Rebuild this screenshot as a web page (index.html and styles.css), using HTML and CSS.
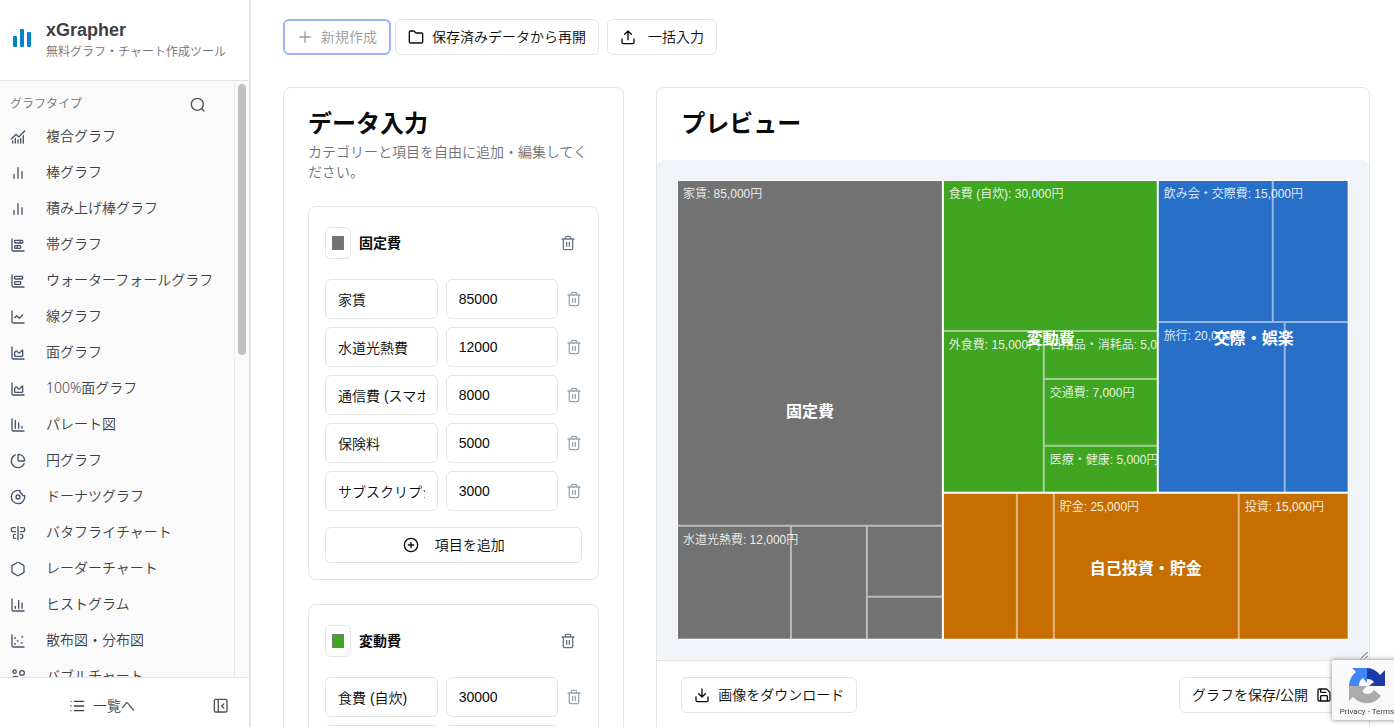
FILE: index.html
```html
<!DOCTYPE html>
<html lang="ja">
<head>
  <meta charset="UTF-8" />
  <meta name="viewport" content="width=device-width, initial-scale=1" />
  <title>xGrapher</title>
  <link rel="stylesheet" href="styles.css">
</head>
<body>
  <!-- Icon set -->
  <svg class="sprite" aria-hidden="true">
    <symbol id="i-combined" viewBox="0 0 24 24"><path d="M12 16v5M16 14v7M20 10v11M22 3l-8.646 8.646a.5.5 0 0 1-.708 0L9.354 8.354a.5.5 0 0 0-.707 0L2 15M4 18v3M8 14v7"/></symbol>
    <symbol id="i-bars" viewBox="0 0 24 24"><path d="M18 20V10M12 20V4M6 20v-6"/></symbol>
    <symbol id="i-stacked" viewBox="0 0 24 24"><path d="M11 13v4M15 5v4M3 3v16a2 2 0 0 0 2 2h16"/><rect x="7" y="13" width="9" height="4" rx="1"/><rect x="7" y="5" width="12" height="4" rx="1"/></symbol>
    <symbol id="i-waterfall" viewBox="0 0 24 24"><path d="M3 3v16a2 2 0 0 0 2 2h16"/><rect x="7" y="13" width="9" height="4" rx="1"/><rect x="7" y="5" width="12" height="4" rx="1"/></symbol>
    <symbol id="i-line" viewBox="0 0 24 24"><path d="M3 3v16a2 2 0 0 0 2 2h16M19 9l-5 5-4-4-3 3"/></symbol>
    <symbol id="i-area" viewBox="0 0 24 24"><path d="M3 3v16a2 2 0 0 0 2 2h16M7 11.207a.5.5 0 0 1 .146-.353l2-2a.5.5 0 0 1 .708 0l3.292 3.292a.5.5 0 0 0 .708 0l4.292-4.292a.5.5 0 0 1 .854.353V16a1 1 0 0 1-1 1H8a1 1 0 0 1-1-1z"/></symbol>
    <symbol id="i-pareto" viewBox="0 0 24 24"><path d="M13 17V9M18 17v-3M3 3v16a2 2 0 0 0 2 2h16M8 17V5"/></symbol>
    <symbol id="i-pie" viewBox="0 0 24 24"><path d="M21 12c.552 0 1.005-.449.95-.998a10 10 0 0 0-8.953-8.951c-.55-.055-.998.398-.998.95v8a1 1 0 0 0 1 1zM21.21 15.89A10 10 0 1 1 8 2.83"/></symbol>
    <symbol id="i-donut" viewBox="0 0 24 24"><path d="M20.5 10a2.5 2.5 0 0 1-2.4-3H18a2.95 2.95 0 0 1-2.6-4.4 10 10 0 1 0 6.3 7.1c-.3.2-.8.3-1.2.3"/><circle cx="12" cy="12" r="3"/></symbol>
    <symbol id="i-butterfly" viewBox="0 0 24 24"><path d="M12 2v20M8 10H4a2 2 0 0 1-2-2V6a2 2 0 0 1 2-2h4M16 10h4a2 2 0 0 0 2-2V6a2 2 0 0 0-2-2h-4M8 20H7a2 2 0 0 1-2-2v-2a2 2 0 0 1 2-2h1M16 14h1a2 2 0 0 1 2 2v2a2 2 0 0 1-2 2h-1"/></symbol>
    <symbol id="i-hexagon" viewBox="0 0 24 24"><path d="M21 16V8a2 2 0 0 0-1-1.73l-7-4a2 2 0 0 0-2 0l-7 4A2 2 0 0 0 3 8v8a2 2 0 0 0 1 1.73l7 4a2 2 0 0 0 2 0l7-4A2 2 0 0 0 21 16z"/></symbol>
    <symbol id="i-histogram" viewBox="0 0 24 24"><path d="M3 3v16a2 2 0 0 0 2 2h16M18 17V9M13 17V5M8 17v-3"/></symbol>
    <symbol id="i-scatter" viewBox="0 0 24 24"><circle cx="7.5" cy="7.5" r=".5"/><circle cx="18.5" cy="5.5" r=".5"/><circle cx="11.5" cy="11.5" r=".5"/><circle cx="7.5" cy="16.5" r=".5"/><circle cx="17.5" cy="14.5" r=".5"/><path d="M3 3v16a2 2 0 0 0 2 2h16"/></symbol>
    <symbol id="i-bubble" viewBox="0 0 24 24"><circle cx="7" cy="4" r="2.500"/><circle cx="18" cy="6" r="3.500"/><circle cx="8" cy="16" r="5"/></symbol>
    <symbol id="i-search" viewBox="0 0 24 24"><circle cx="11" cy="11" r="9"/><path d="M21 21l-3.500-3.500"/></symbol>
    <symbol id="i-list" viewBox="0 0 24 24"><path d="M8 5h14M8 12h14M8 19h14M3 5h.01M3 12h.01M3 19h.01"/></symbol>
    <symbol id="i-panel" viewBox="0 0 24 24"><rect x="2" y="2" width="19" height="19" rx="2"/><path d="M8 2v19M16 15l-3-3 3-3"/></symbol>
    <symbol id="i-plus" viewBox="0 0 24 24"><path d="M4 12h16M12 4v16"/></symbol>
    <symbol id="i-folder" viewBox="0 0 24 24"><path d="M20 21a2 2 0 0 0 2-2V8a2 2 0 0 0-2-2h-8L9 3H4a2 2 0 0 0-2 2v14a2 2 0 0 0 2 2z"/></symbol>
    <symbol id="i-upload" viewBox="0 0 24 24"><path d="M21 15v5a2 2 0 0 1-2 2H5a2 2 0 0 1-2-2v-5M17 8l-5-5-5 5M12 3v13"/></symbol>
    <symbol id="i-download" viewBox="0 0 24 24"><path d="M21 15v5a2 2 0 0 1-2 2H5a2 2 0 0 1-2-2v-5M7 10l5 5 5-5M12 15V3"/></symbol>
    <symbol id="i-trash" viewBox="0 0 24 24"><path d="M3 6h18M19 6v14a2 2 0 0 1-2 2H7a2 2 0 0 1-2-2V6M8 6V4a2 2 0 0 1 2-2h4a2 2 0 0 1 2 2v2M10 11v6M14 11v6"/></symbol>
    <symbol id="i-circle-plus" viewBox="0 0 24 24"><circle cx="12" cy="12" r="10"/><path d="M8 12h8M12 8v8"/></symbol>
    <symbol id="i-save" viewBox="0 0 24 24"><path d="M15.200 3a2 2 0 0 1 1.400.6l3.800 3.800a2 2 0 0 1 .6 1.400V19a2 2 0 0 1-2 2H5a2 2 0 0 1-2-2V5a2 2 0 0 1 2-2zM17 21v-7a1 1 0 0 0-1-1H8a1 1 0 0 0-1 1v7M7 3v4a1 1 0 0 0 1 1h7"/></symbol>
  </svg>

  <div class="app">
    <aside class="sidebar">
      <header class="brand">
        <svg class="brand-logo" viewBox="0 0 20 20" aria-hidden="true">
          <rect x="1" y="8" width="4" height="11" rx="1"/>
          <rect x="8" y="1" width="4" height="18" rx="1"/>
          <rect x="15" y="4" width="4" height="15" rx="1"/>
        </svg>
        <div>
          <div class="brand-name">xGrapher</div>
          <div class="brand-tagline">無料グラフ・チャート作成ツール</div>
        </div>
      </header>

      <div class="nav-wrap">
        <nav class="nav">
          <div class="nav-head">
            <span>グラフタイプ</span>
            <button class="icon-btn" type="button" aria-label="検索"><svg class="icon"><use href="#i-search"/></svg></button>
          </div>
          <a class="nav-item" href="#"><svg class="icon"><use href="#i-combined"/></svg>複合グラフ</a>
          <a class="nav-item" href="#"><svg class="icon"><use href="#i-bars"/></svg>棒グラフ</a>
          <a class="nav-item" href="#"><svg class="icon"><use href="#i-bars"/></svg>積み上げ棒グラフ</a>
          <a class="nav-item" href="#"><svg class="icon"><use href="#i-stacked"/></svg>帯グラフ</a>
          <a class="nav-item" href="#"><svg class="icon"><use href="#i-waterfall"/></svg>ウォーターフォールグラフ</a>
          <a class="nav-item" href="#"><svg class="icon"><use href="#i-line"/></svg>線グラフ</a>
          <a class="nav-item" href="#"><svg class="icon"><use href="#i-area"/></svg>面グラフ</a>
          <a class="nav-item" href="#"><svg class="icon"><use href="#i-area"/></svg>100%面グラフ</a>
          <a class="nav-item" href="#"><svg class="icon"><use href="#i-pareto"/></svg>パレート図</a>
          <a class="nav-item" href="#"><svg class="icon"><use href="#i-pie"/></svg>円グラフ</a>
          <a class="nav-item" href="#"><svg class="icon"><use href="#i-donut"/></svg>ドーナツグラフ</a>
          <a class="nav-item" href="#"><svg class="icon"><use href="#i-butterfly"/></svg>バタフライチャート</a>
          <a class="nav-item" href="#"><svg class="icon"><use href="#i-hexagon"/></svg>レーダーチャート</a>
          <a class="nav-item" href="#"><svg class="icon"><use href="#i-histogram"/></svg>ヒストグラム</a>
          <a class="nav-item" href="#"><svg class="icon"><use href="#i-scatter"/></svg>散布図・分布図</a>
          <a class="nav-item" href="#"><svg class="icon"><use href="#i-bubble"/></svg>バブルチャート</a>
        </nav>
        <div class="scroll-track"><div class="scroll-thumb"></div></div>
      </div>

      <footer class="sidebar-foot">
        <a class="list-link" href="#"><svg class="icon"><use href="#i-list"/></svg>一覧へ</a>
        <button class="icon-btn" type="button" aria-label="サイドバーを閉じる"><svg class="icon"><use href="#i-panel"/></svg></button>
      </footer>
    </aside>

    <main class="main">
      <div class="toolbar">
        <button class="btn btn-new" type="button"><svg class="icon"><use href="#i-plus"/></svg>新規作成</button>
        <div class="toolbar-group">
          <button class="btn" type="button"><svg class="icon"><use href="#i-folder"/></svg>保存済みデータから再開</button>
          <button class="btn btn-import" type="button"><svg class="icon"><use href="#i-upload"/></svg>一括入力</button>
        </div>
      </div>

      <div class="columns">
        <section class="card data-card">
          <h2 class="card-title">データ入力</h2>
          <p class="card-desc">カテゴリーと項目を自由に追加・編集してください。</p>

          <div class="group">
            <div class="group-head">
              <input class="swatch" type="color" value="#727272" aria-label="固定費の色">
              <h3 class="group-name">固定費</h3>
              <button class="trash" type="button" aria-label="固定費を削除"><svg class="icon"><use href="#i-trash"/></svg></button>
            </div>
            <div class="rows">
              <div class="row">
                <input class="field" type="text" value="家賃" aria-label="項目名">
                <input class="field" type="text" value="85000" aria-label="金額">
                <button class="trash trash-row" type="button" aria-label="削除"><svg class="icon"><use href="#i-trash"/></svg></button>
              </div>
              <div class="row">
                <input class="field" type="text" value="水道光熱費" aria-label="項目名">
                <input class="field" type="text" value="12000" aria-label="金額">
                <button class="trash trash-row" type="button" aria-label="削除"><svg class="icon"><use href="#i-trash"/></svg></button>
              </div>
              <div class="row">
                <input class="field" type="text" value="通信費 (スマホ)" aria-label="項目名">
                <input class="field" type="text" value="8000" aria-label="金額">
                <button class="trash trash-row" type="button" aria-label="削除"><svg class="icon"><use href="#i-trash"/></svg></button>
              </div>
              <div class="row">
                <input class="field" type="text" value="保険料" aria-label="項目名">
                <input class="field" type="text" value="5000" aria-label="金額">
                <button class="trash trash-row" type="button" aria-label="削除"><svg class="icon"><use href="#i-trash"/></svg></button>
              </div>
              <div class="row">
                <input class="field" type="text" value="サブスクリプション" aria-label="項目名">
                <input class="field" type="text" value="3000" aria-label="金額">
                <button class="trash trash-row" type="button" aria-label="削除"><svg class="icon"><use href="#i-trash"/></svg></button>
              </div>
            </div>
            <button class="btn btn-add" type="button"><svg class="icon"><use href="#i-circle-plus"/></svg>項目を追加</button>
          </div>

          <div class="group">
            <div class="group-head">
              <input class="swatch" type="color" value="#40a622" aria-label="変動費の色">
              <h3 class="group-name">変動費</h3>
              <button class="trash" type="button" aria-label="変動費を削除"><svg class="icon"><use href="#i-trash"/></svg></button>
            </div>
            <div class="rows">
              <div class="row">
                <input class="field" type="text" value="食費 (自炊)" aria-label="項目名">
                <input class="field" type="text" value="30000" aria-label="金額">
                <button class="trash trash-row" type="button" aria-label="削除"><svg class="icon"><use href="#i-trash"/></svg></button>
              </div>
              <div class="row">
                <input class="field" type="text" value="外食費" aria-label="項目名">
                <input class="field" type="text" value="15000" aria-label="金額">
                <button class="trash trash-row" type="button" aria-label="削除"><svg class="icon"><use href="#i-trash"/></svg></button>
              </div>
            </div>
          </div>
        </section>

        <section class="card preview-card">
          <h2 class="card-title preview-title">プレビュー</h2>
          <div class="chart-panel">
            <svg class="treemap" viewBox="0 0 672 460" role="img" aria-label="家計のツリーマップ">
              <!-- 固定費 -->
              <rect class="fixed" width="266" height="460"/>
              <path class="split" d="M0 346H266M114 346V460M190 346V460M190 417H266"/>
              <text class="cell-label" x="6" y="18">家賃: 85,000円</text>
              <text class="cell-label" x="6" y="364">水道光熱費: 12,000円</text>
              <!-- 変動費 -->
              <rect class="variable" x="266" width="215" height="313"/>
              <path class="split" d="M266 151H481M367 151V313M367 199H481M367 266H481"/>
              <text class="cell-label" x="272" y="18">食費 (自炊): 30,000円</text>
              <text class="cell-label" x="272" y="169">外食費: 15,000円</text>
              <text class="cell-label" x="373" y="169">日用品・消耗品: 5,000円</text>
              <text class="cell-label" x="373" y="217">交通費: 7,000円</text>
              <text class="cell-label" x="373" y="284">医療・健康: 5,000円</text>
              <!-- 交際・娯楽 -->
              <rect class="social" x="481" width="191" height="313"/>
              <path class="split" d="M481 142H672M596 0V142M608 142V313"/>
              <text class="cell-label" x="487" y="18">飲み会・交際費: 15,000円</text>
              <text class="cell-label" x="487" y="160">旅行: 20,000円</text>
              <!-- 自己投資・貯金 -->
              <rect class="savings" x="266" y="313" width="406" height="147"/>
              <path class="split" d="M340 313V460M377 313V460M562 313V460"/>
              <text class="cell-label" x="383" y="331">貯金: 25,000円</text>
              <text class="cell-label" x="568" y="331">投資: 15,000円</text>

              <path class="frame" d="M0 0H672V460H0ZM266 0V460M481 0V313M266 313H672"/>
              <text class="group-label" x="133" y="237">固定費</text>
              <text class="group-label" x="374" y="164">変動費</text>
              <text class="group-label" x="577" y="164">交際・娯楽</text>
              <text class="group-label" x="469" y="394">自己投資・貯金</text>
            </svg>
            <svg class="resize-grip" viewBox="0 0 8 8" aria-hidden="true"><path d="M1 7.500L7.500 1M5 7.500L7.500 5"/></svg>
          </div>
          <div class="preview-foot">
            <button class="btn" type="button"><svg class="icon"><use href="#i-download"/></svg>画像をダウンロード</button>
            <button class="btn" type="button">グラフを保存/公開<svg class="icon"><use href="#i-save"/></svg></button>
          </div>
        </section>
      </div>
    </main>
  </div>

  <!-- reCAPTCHA badge -->
  <div class="recaptcha">
    <svg class="recaptcha-logo" viewBox="0 0 40 40" aria-hidden="true">
      <path fill="#1c3aa9" d="M38 20V4l-5 5A17 17 0 0 0 20 2v11c4 0 5 1 7 3l-5 4z"/>
      <path fill="#4285f4" d="M20 2H5l4 4a18 18 0 0 0-7 14h10c0-4 1-6 4-8l4 5z"/>
      <path fill="#ababab" d="M2 20v15l4-4a18 18 0 0 0 28-1l-7-6c-3 5-9 5-12 1l5-5z"/>
    </svg>
    <div class="recaptcha-text">Privacy - Terms</div>
  </div>
</body>
</html>
```
FILE: styles.css
```css
* {
  margin: 0;
  padding: 0;
  box-sizing: border-box;
}

body {
  height: 100vh;
  overflow: hidden;
  background: #fff;
  color: #0a0a0a;
  font-family: "Liberation Sans", "Noto Sans CJK JP", sans-serif;
  font-size: 14px;
  font-weight: 350;
  line-height: 20px;
}

button,
input {
  font: inherit;
  color: inherit;
}

button {
  background: none;
  border: 0;
  cursor: pointer;
}

a {
  color: inherit;
  text-decoration: none;
}

.sprite {
  position: absolute;
  width: 0;
  height: 0;
}

.icon {
  flex: none;
  width: 16px;
  height: 16px;
  fill: none;
  stroke: currentColor;
  stroke-width: 2;
  stroke-linecap: round;
  stroke-linejoin: round;
}

.app {
  display: flex;
  height: 100vh;
}

/* Sidebar */
.sidebar {
  display: flex;
  flex-direction: column;
  flex: none;
  width: 251px;
  border-right: 2px solid #e4e4e4;
}

.brand {
  display: flex;
  align-items: center;
  gap: 14px;
  height: 81px;
  padding: 0 12px;
  border-bottom: 1px solid #e4e4e4;
}

.brand-logo {
  width: 20px;
  height: 20px;
  margin-bottom: 4px;
  fill: #0284c7;
}

.brand-name {
  color: #3f3f46;
  font-size: 18px;
  font-weight: 700;
  line-height: 24px;
}

.brand-tagline {
  color: #71717a;
  font-size: 12px;
  white-space: nowrap;
}

.nav-wrap {
  display: flex;
  flex: 1;
  min-height: 0;
  background: #fafafa;
}

.nav {
  flex: 1;
  overflow: hidden;
  padding-top: 9px;
  color: #3f3f46;
  font-family: "Noto Sans", "Noto Sans CJK JP", sans-serif;
}

.nav-head {
  display: flex;
  align-items: center;
  justify-content: space-between;
  height: 28px;
  padding: 0 28px 0 10px;
  color: #71717a;
  font-size: 12px;
}

.nav-item {
  display: flex;
  align-items: center;
  gap: 20px;
  height: 36px;
  padding: 0 10px;
  white-space: nowrap;
}

.nav .icon {
  margin-top: 2px;
}

.nav-item .icon {
  color: #475569;
}

.icon-btn {
  display: flex;
  color: #52525b;
}

.scroll-track {
  flex: none;
  width: 15px;
  padding: 3px;
  border-left: 1px solid #e8e8e8;
}

.scroll-thumb {
  width: 8px;
  height: 271px;
  border-radius: 4px;
  background: #c1c1c1;
}

.sidebar-foot {
  display: flex;
  align-items: center;
  justify-content: space-between;
  height: 50px;
  padding: 7px 20px 0 69px;
  border-top: 1px solid #e4e4e4;
  color: #3f3f46;
}

.list-link {
  display: flex;
  align-items: center;
  gap: 8px;
}

/* Main */
.main {
  flex: 1;
  min-width: 0;
  overflow: hidden;
  padding: 19px 24px 0 32px;
}

.toolbar {
  display: flex;
  gap: 4px;
  margin-bottom: 32px;
}

.toolbar-group {
  display: flex;
  gap: 8px;
}

.btn {
  display: flex;
  align-items: center;
  justify-content: center;
  gap: 8px;
  height: 36px;
  padding: 0 12px;
  border: 1px solid #e4e4e4;
  border-radius: 6px;
  background: #fff;
  white-space: nowrap;
}

.btn-new {
  border: 2px solid #9db4fb;
  color: #9a9a9a;
}

.btn-import {
  gap: 12px;
}

.columns {
  display: grid;
  grid-template-columns: minmax(0, 11fr) minmax(0, 23fr);
  align-items: start;
  gap: 32px;
}

.card {
  border: 1px solid #e4e4e4;
  border-radius: 8px;
  background: #fff;
}

.data-card {
  padding: 24px;
}

.card-title {
  font-size: 24px;
  font-weight: 700;
  line-height: 24px;
}

.card-desc {
  margin-top: 6px;
  color: #71717a;
}

.group {
  margin-top: 24px;
  padding: 16px;
  border: 1px solid #e4e4e4;
  border-radius: 8px;
}

.group-head {
  display: flex;
  align-items: center;
  gap: 8px;
  height: 40px;
  margin-bottom: 16px;
}

.swatch {
  width: 26px;
  height: 32px;
  padding: 8px 6px;
  border: 1px solid #e4e4e4;
  border-radius: 6px;
  background: #fff;
}

.swatch::-webkit-color-swatch-wrapper {
  padding: 0;
}

.swatch::-webkit-color-swatch {
  border: 1px solid #777;
}

.group-name {
  flex: 1;
  font-size: 14px;
  font-weight: 700;
}

.trash {
  display: flex;
  justify-content: center;
  width: 28px;
  color: #64748b;
}

.rows {
  display: grid;
  gap: 8px;
}

.row {
  display: grid;
  grid-template-columns: minmax(0, 1fr) minmax(0, 1fr) 16px;
  align-items: center;
  gap: 8px;
}

.field {
  width: 100%;
  height: 40px;
  padding: 0 12px;
  border: 1px solid #e4e4e4;
  border-radius: 6px;
  background: #fff;
}

.trash-row {
  width: 16px;
  color: #94a3b8;
}

.btn-add {
  gap: 16px;
  width: 100%;
  margin-top: 16px;
}

/* Preview */
.preview-title {
  padding: 24px;
}

.chart-panel {
  position: relative;
  padding: 20px;
  border-radius: 8px;
  background: #f0f3f8;
}

.treemap {
  display: block;
  width: 100%;
  height: auto;
}

.fixed { fill: #727272; }
.variable { fill: #40a622; }
.social { fill: #286fc7; }
.savings { fill: #c66f00; }

.split {
  fill: none;
  stroke: #fff;
  stroke-opacity: 0.5;
  stroke-width: 2;
}

.frame {
  fill: none;
  stroke: #fff;
  stroke-width: 2;
}

.cell-label {
  fill: #fff;
  fill-opacity: 0.9;
  font-size: 12px;
}

.group-label {
  fill: #fff;
  font-size: 16px;
  font-weight: 700;
  text-anchor: middle;
}

.resize-grip {
  position: absolute;
  right: 1px;
  bottom: 1px;
  width: 8px;
  height: 8px;
  stroke: #555;
}

.preview-foot {
  display: flex;
  justify-content: space-between;
  padding: 16px 24px 24px;
  border-top: 1px solid #e4e4e4;
}

/* reCAPTCHA badge, partly off the right edge */
.recaptcha {
  position: fixed;
  right: -8px;
  bottom: 7px;
  width: 70px;
  height: 60px;
  padding-top: 6px;
  border-radius: 2px;
  background: #f9f9f9;
  box-shadow: 0 0 5px #808080;
  text-align: center;
}

.recaptcha-logo {
  display: block;
  width: 40px;
  height: 40px;
  margin: 0 auto;
}

.recaptcha-text {
  color: #444;
  font-family: Roboto, sans-serif;
  font-size: 8px;
  font-weight: 400;
  line-height: 12px;
  white-space: nowrap;
}
```
